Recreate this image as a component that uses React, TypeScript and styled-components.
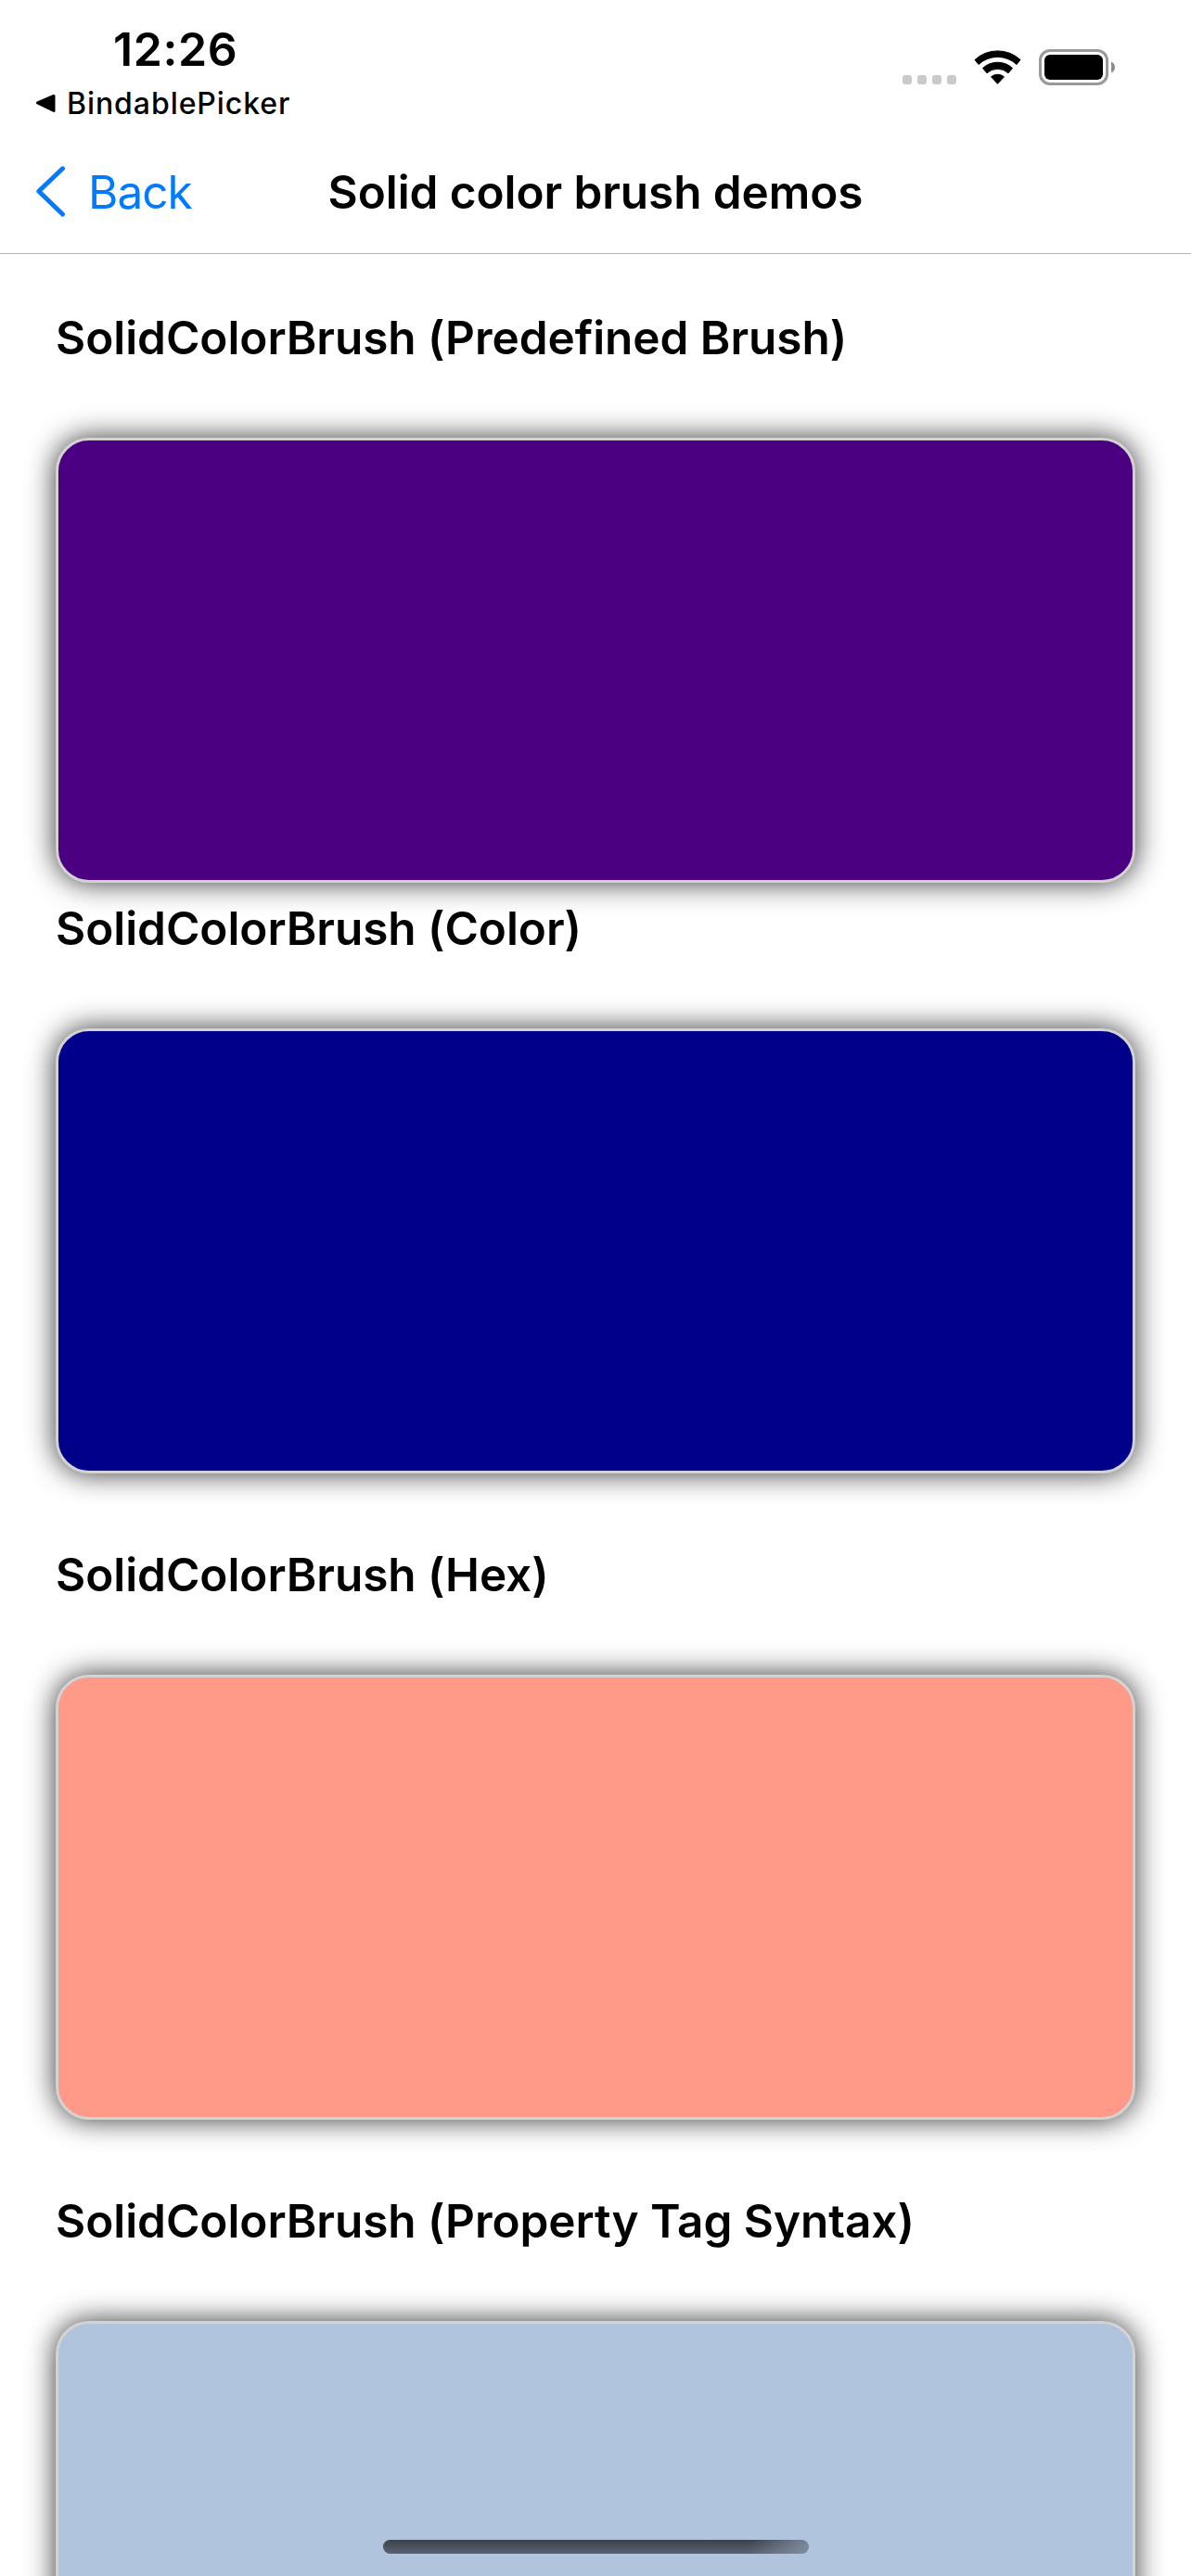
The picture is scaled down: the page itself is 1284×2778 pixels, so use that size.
import React from "react";
import styled, { createGlobalStyle } from "styled-components";

const GlobalStyle = createGlobalStyle`
  * { box-sizing: border-box; }
  html, body { margin: 0; padding: 0; background: #fff; overflow: hidden; }
`;

const Screen = styled.div`
  position: relative;
  display: flex;
  flex-direction: column;
  width: 1284px;
  height: 2778px;
  overflow: hidden;
  background: #fff;
  color: #000;
  font-family: Inter, "Liberation Sans", sans-serif;
`;

const StatusBar = styled.header`
  display: flex;
  flex: none;
  justify-content: space-between;
  height: 141px;
  padding: 23px 82px 0 38px;
`;

const StatusLeft = styled.div`
  display: flex;
  flex-direction: column;
`;

const Time = styled.div`
  padding-left: 84px;
  font-size: 50px;
  font-weight: 600;
  line-height: 60px;
  letter-spacing: 0.6px;
`;

const ReturnLink = styled.div`
  display: flex;
  align-items: center;
  gap: 12px;
  height: 40px;
  margin-top: 9px;
  font-size: 32px;
  font-weight: 500;
  line-height: 40px;
  letter-spacing: 0.93px;
`;

const StatusIcons = styled.div`
  display: flex;
  align-items: flex-start;
  padding-top: 30px;
`;

const Cellular = styled.div`
  display: flex;
  gap: 6px;
  padding-top: 28px;
  margin-right: 19px;
`;

const CellDot = styled.span`
  width: 10px;
  height: 10px;
  border-radius: 3px;
  background: #cacaca;
`;

const WifiIcon = styled.svg`
  display: block;
  margin: 1px 18px 0 0;
`;

const NavBar = styled.nav`
  display: grid;
  grid-template-columns: 350px 1fr 350px;
  flex: none;
  align-items: center;
  height: 133px;
  padding-bottom: 1px;
  border-bottom: 1px solid #b3b3b3;
`;

const BackButton = styled.a`
  display: flex;
  align-items: center;
  gap: 24px;
  padding-left: 38px;
  color: #007aff;
  font-size: 49.5px;
  line-height: 60px;
  letter-spacing: -1px;
`;

const Title = styled.h1`
  margin: 0;
  font-size: 49.5px;
  font-weight: 600;
  line-height: 60px;
  letter-spacing: -0.08px;
  text-align: center;
  white-space: nowrap;
`;

const Content = styled.main`
  display: flex;
  flex-direction: column;
  padding: 60px 60px 0;
`;

const Section = styled.section<{ $gap: number }>`
  display: flex;
  flex-direction: column;
  gap: 77px;
  margin-bottom: ${(p) => p.$gap}px;
`;

const Heading = styled.h2`
  margin: 0;
  font-size: 49.5px;
  font-weight: 600;
  line-height: 61px;
  letter-spacing: -0.05px;
  white-space: nowrap;
`;

const Swatch = styled.div<{ $color: string }>`
  height: 480px;
  border: 3px solid #d3d3d3;
  border-radius: 36px;
  background: ${(p) => p.$color};
  box-shadow: 0 0 31px rgba(0, 0, 0, 0.8);
`;

const HomeIndicator = styled.div`
  position: absolute;
  left: 413px;
  bottom: 24px;
  width: 459px;
  height: 15px;
  border-radius: 8px;
  background:
    linear-gradient(105deg, transparent 86%, rgba(135, 150, 170, 0.8) 99%),
    linear-gradient(#3c424b, #5d6371);
`;

const brushes = [
  { label: "SolidColorBrush (Predefined Brush)", color: "#4b0082", gap: 19 },
  { label: "SolidColorBrush (Color)", color: "#00008b", gap: 79 },
  { label: "SolidColorBrush (Hex)", color: "#ff9988", gap: 79 },
  { label: "SolidColorBrush (Property Tag Syntax)", color: "#b0c4de", gap: 0 },
];

export default function App() {
  return (
    <Screen>
      <GlobalStyle />
      <StatusBar>
        <StatusLeft>
          <Time>12:26</Time>
          <ReturnLink>
            <svg width="22" height="22" viewBox="0 0 22 22">
              <path d="M2.5 10 L20 2.5 V18.5 Z" fill="#000" stroke="#000" strokeWidth="3" strokeLinejoin="round" />
            </svg>
            <span>BindablePicker</span>
          </ReturnLink>
        </StatusLeft>
        <StatusIcons>
          <Cellular>
            <CellDot />
            <CellDot />
            <CellDot />
            <CellDot />
          </Cellular>
          <WifiIcon width="52" height="38" viewBox="0 0 52 38">
            <path d="M1 10.5 A36 36 0 0 1 50 10.5 L46 15.5 A30 30 0 0 0 5 15.5 Z" stroke="#000" strokeWidth="1" strokeLinejoin="round" />
            <path d="M9.5 19.5 A23.5 23.5 0 0 1 41.5 19.5 L37 24.8 A17 17 0 0 0 14 24.8 Z" stroke="#000" strokeWidth="1" strokeLinejoin="round" />
            <path d="M18.5 28.8 A11 11 0 0 1 32.5 28.8 L25.5 36.3 Z" stroke="#000" strokeWidth="1" strokeLinejoin="round" />
          </WifiIcon>
          <svg width="82" height="39" viewBox="0 0 82 39">
            <rect x="1.5" y="1.5" width="72" height="36" rx="10.5" fill="none" stroke="#999" strokeWidth="3" />
            <rect x="6" y="6" width="63" height="27" rx="6" />
            <path d="M78 13.5 Q82 15.5 82 19.5 Q82 23.5 78 25.5 Z" fill="#8c8c8c" />
          </svg>
        </StatusIcons>
      </StatusBar>
      <NavBar>
        <BackButton>
          <svg width="33" height="55" viewBox="0 0 33 55">
            <path d="M29.5 2.8 L3.8 27.3 L29.5 52" fill="none" stroke="#007aff" strokeWidth="5" strokeLinecap="round" strokeLinejoin="round" />
          </svg>
          <span>Back</span>
        </BackButton>
        <Title>Solid color brush demos</Title>
      </NavBar>
      <Content>
        {brushes.map((b) => (
          <Section key={b.label} $gap={b.gap}>
            <Heading>{b.label}</Heading>
            <Swatch $color={b.color} />
          </Section>
        ))}
      </Content>
      <HomeIndicator />
    </Screen>
  );
}
